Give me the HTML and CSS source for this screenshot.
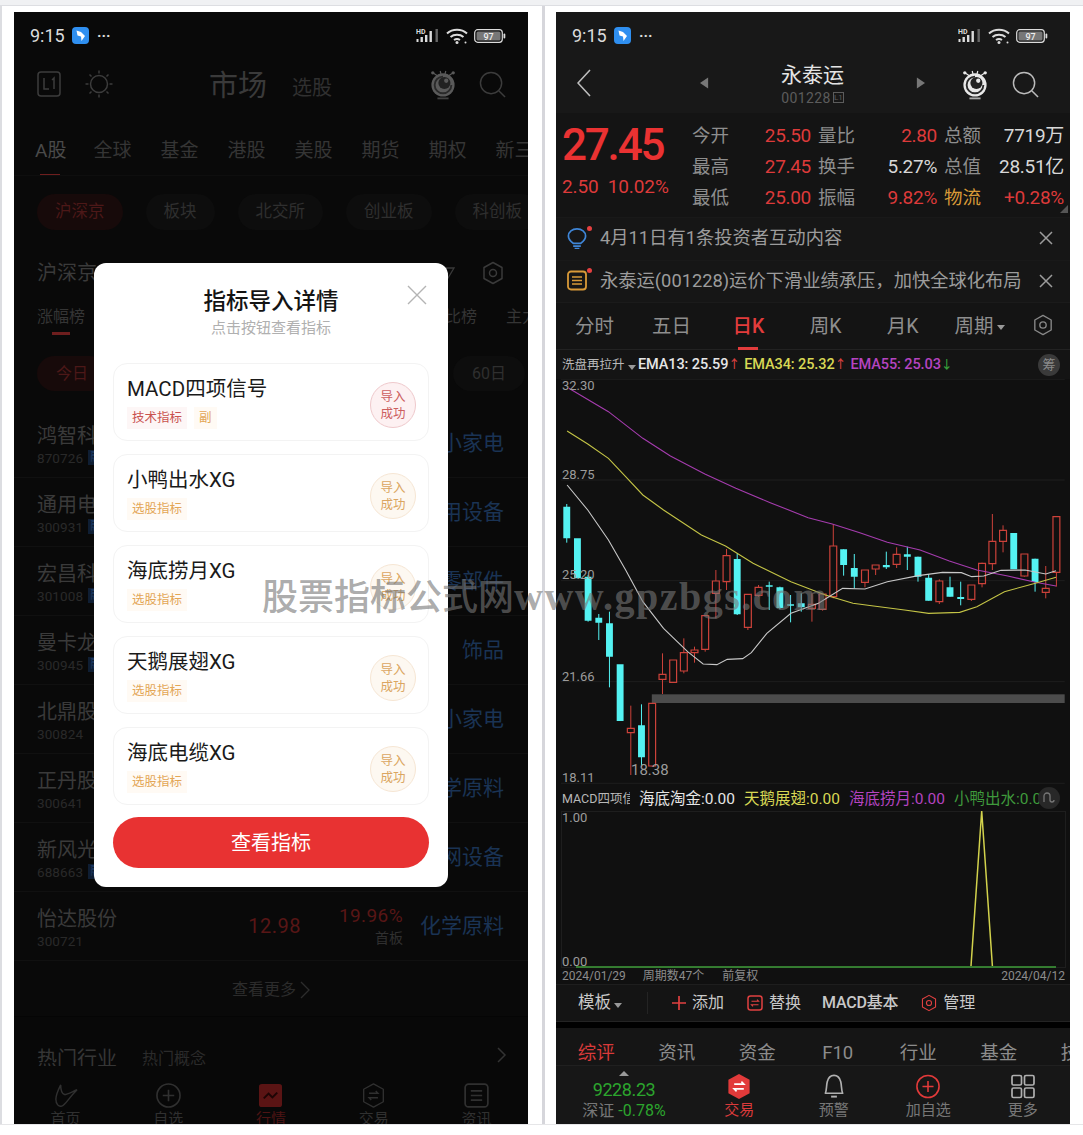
FILE: index.html
```html
<!DOCTYPE html>
<html lang="zh">
<head>
<meta charset="utf-8">
<title>指标导入详情</title>
<link rel="stylesheet" href="styles.css">
</head>
<body>
<svg class="defs" width="0" height="0" aria-hidden="true">
  <symbol id="i-app" viewBox="0 0 17 17"><rect width="17" height="17" rx="4" fill="#2f8ff0"/><path d="M4.500 3.500L9 5L13 9L9.500 14L9 9.500L5.500 8.500Z" fill="#fff"/></symbol>
  <symbol id="i-signal" viewBox="0 0 24 16"><text x="0" y="6" class="hd-text">HD</text><g fill="currentColor"><rect x="0.500" y="11" width="2" height="3"/><rect x="4.500" y="9" width="2.400" height="5"/><rect x="9" y="7" width="2.400" height="7"/><rect x="13.500" y="3" width="2.400" height="11"/></g><rect x="19.500" y="1" width="2.400" height="13" fill="#666"/></symbol>
  <symbol id="i-wifi" viewBox="0 0 22 16"><g fill="none" stroke="currentColor" stroke-width="2"><path d="M1 5.500C6.500 0.500 15.500 0.500 21 5.500"/><path d="M4.500 9C8 6 14 6 17.500 9"/><path d="M8 12C9.800 10.800 12.200 10.800 14 12"/></g><circle cx="11" cy="14.500" r="1.500" fill="currentColor"/><circle cx="19.500" cy="14.500" r="1" fill="currentColor"/></symbol>
  <symbol id="i-batt" viewBox="0 0 32 14"><rect x="0.700" y="0.700" width="27.600" height="12.600" rx="3" fill="none" stroke="currentColor" stroke-width="1.200"/><rect x="2.500" y="2.500" width="24" height="9" rx="1.500" fill="#777"/><rect x="29.500" y="4.500" width="1.800" height="5" rx="0.900" fill="currentColor"/><text x="14.500" y="10.500" class="batt-text">97</text></symbol>
  <symbol id="i-mascot" viewBox="0 0 28 34"><circle cx="3" cy="5" r="1.800" fill="currentColor"/><circle cx="25" cy="5" r="1.800" fill="currentColor"/><path d="M3 5L8 8M25 5L20 8M11 3L12 7M17 3L16 7" stroke="currentColor" stroke-width="1.300"/><circle cx="14" cy="18" r="12.500" fill="currentColor"/><path d="M14 9A9 9 0 1 0 23 18" fill="none" stroke="#2a2a2a" stroke-width="2"/><circle cx="15.500" cy="16" r="6.500" fill="#222"/><circle cx="17.500" cy="13.500" r="2.300" fill="currentColor"/><path d="M8 31.500H20V33.500H8Z" fill="currentColor" opacity="0.700"/></symbol>
  <symbol id="i-search" viewBox="0 0 28 28"><circle cx="12.500" cy="12.500" r="11" fill="none" stroke="currentColor" stroke-width="1.500"/><path d="M20.500 20.500L27 27" stroke="currentColor" stroke-width="1.500" fill="none"/></symbol>
  <symbol id="i-hex" viewBox="0 0 22 24"><path d="M11 1.500L20 6.500V17.500L11 22.500L2 17.500V6.500Z" fill="none" stroke="currentColor" stroke-width="1.500" stroke-linejoin="round"/><circle cx="11" cy="12" r="3.500" fill="none" stroke="currentColor" stroke-width="1.500"/></symbol>
  <symbol id="i-sx" viewBox="0 0 16 16"><path d="M2 2L14 14M14 2L2 14" stroke="currentColor" stroke-width="1.500" fill="none"/></symbol>
  <symbol id="i-trade" viewBox="0 0 24 28"><path d="M12 1L23 7V21L12 27L1 21V7Z" fill="currentColor"/><path d="M7 11.500H17L14.500 9M17 16.500H7L9.500 19" fill="none" stroke="#fff" stroke-width="1.700"/></symbol>
  <symbol id="i-trade-o" viewBox="0 0 24 28"><path d="M12 1L23 7V21L12 27L1 21V7Z" fill="none" stroke="currentColor" stroke-width="1.500" stroke-linejoin="round"/><path d="M7 11.500H17L14.500 9M17 16.500H7L9.500 19" fill="none" stroke="currentColor" stroke-width="1.500"/></symbol>
  <symbol id="i-plus-o" viewBox="0 0 26 26"><circle cx="13" cy="13" r="12" fill="none" stroke="currentColor" stroke-width="1.700"/><path d="M13 7V19M7 13H19" stroke="currentColor" stroke-width="1.700"/></symbol>
  <symbol id="i-doc" viewBox="0 0 22 22"><rect x="1" y="1" width="20" height="20" rx="3" fill="none" stroke="currentColor" stroke-width="1.500"/><path d="M6 7H16M6 11H16M6 15H16" stroke="currentColor" stroke-width="1.500"/></symbol>
</svg>

<div class="page">
  <div class="top-strip"></div>
  <div class="panels">
    <section class="panel panel-left">
      <div class="phone phone-dim">
        <div class="status">
          <span class="status-time">9:15</span>
          <svg class="ic-app"><use href="#i-app"/></svg>
          <span class="status-dots">···</span>
          <span class="status-right">
            <svg class="ic-signal"><use href="#i-signal"/></svg>
            <svg class="ic-wifi"><use href="#i-wifi"/></svg>
            <svg class="ic-batt"><use href="#i-batt"/></svg>
          </span>
        </div>
        <div class="m-nav">
          <svg class="ic-l1" viewBox="0 0 24 26"><rect x="1" y="1" width="22" height="24" rx="3" fill="none" stroke="currentColor" stroke-width="1.500"/><path d="M7 7V18H12M15 9L17 7V18" fill="none" stroke="currentColor" stroke-width="1.500"/></svg>
          <svg class="ic-sun" viewBox="0 0 28 28"><circle cx="14" cy="14" r="8.500" fill="none" stroke="currentColor" stroke-width="1.500"/><path d="M14 0.500V3.500M14 24.500V27.500M0.500 14H3.500M24.500 14H27.500M4.500 4.500L6.500 6.500M21.500 21.500L23.500 23.500M4.500 23.500L6.500 21.500M21.500 6.500L23.500 4.500" stroke="currentColor" stroke-width="1.500"/></svg>
          <span class="m-title">市场</span>
          <span class="m-sub">选股</span>
          <span class="m-nav-end">
            <svg class="ic-mascot ic-mascot-dim"><use href="#i-mascot"/></svg>
            <svg class="ic-search"><use href="#i-search"/></svg>
          </span>
        </div>
        <nav class="m-tabs">
          <span class="m-tab m-tab-on">A股</span><span class="m-tab">全球</span><span class="m-tab">基金</span><span class="m-tab">港股</span><span class="m-tab">美股</span><span class="m-tab">期货</span><span class="m-tab">期权</span><span class="m-tab">新三板</span>
        </nav>
        <div class="m-chips">
          <span class="chip chip-on">沪深京</span><span class="chip">板块</span><span class="chip">北交所</span><span class="chip">创业板</span><span class="chip">科创板</span>
        </div>
        <div class="m-head">
          <span class="m-head-title">沪深京A股</span>
          <span class="m-head-end">
            <svg class="ic-filter" viewBox="0 0 14 12"><path d="M1 1H13L7 11Z" fill="none" stroke="currentColor" stroke-width="1.300"/></svg>
            <svg class="ic-hex"><use href="#i-hex"/></svg>
          </span>
        </div>
        <div class="m-sub-tabs">
          <span class="m-sub-tab m-sub-tab-on">涨幅榜</span>
          <span class="m-sub-end"><span>量比榜</span><span>主力榜</span></span>
        </div>
        <div class="m-periods">
          <span class="period period-on">今日</span>
          <span class="period period-end">60日</span>
        </div>
        <div class="m-list">
          <div class="l-row"><div class="l-id"><div class="l-name">鸿智科技</div><div class="l-code">870726<span class="l-badge">融</span></div></div><div class="l-cat">小家电</div></div>
          <div class="l-row"><div class="l-id"><div class="l-name">通用电梯</div><div class="l-code">300931<span class="l-badge">融</span></div></div><div class="l-cat">专用设备</div></div>
          <div class="l-row"><div class="l-id"><div class="l-name">宏昌科技</div><div class="l-code">301008<span class="l-badge">融</span></div></div><div class="l-cat">汽车零部件</div></div>
          <div class="l-row"><div class="l-id"><div class="l-name">曼卡龙</div><div class="l-code">300945<span class="l-badge">融</span></div></div><div class="l-cat">饰品</div></div>
          <div class="l-row"><div class="l-id"><div class="l-name">北鼎股份</div><div class="l-code">300824</div></div><div class="l-cat">小家电</div></div>
          <div class="l-row"><div class="l-id"><div class="l-name">正丹股份</div><div class="l-code">300641</div></div><div class="l-cat">化学原料</div></div>
          <div class="l-row"><div class="l-id"><div class="l-name">新风光</div><div class="l-code">688663<span class="l-badge">融</span></div></div><div class="l-cat">电网设备</div></div>
          <div class="l-row"><div class="l-id"><div class="l-name">怡达股份</div><div class="l-code">300721</div></div><div class="l-price">12.98</div><div class="l-chg"><div class="l-pct">19.96%</div><div class="l-board">首板</div></div><div class="l-cat">化学原料</div></div>
        </div>
        <div class="m-more"><span>查看更多</span><svg class="ic-more" viewBox="0 0 10 18"><path d="M1 1L9 9L1 17" fill="none" stroke="currentColor" stroke-width="1.300"/></svg></div>
        <div class="m-hot">
          <span class="m-hot-a">热门行业</span><span class="m-hot-b">热门概念</span>
          <svg class="ic-hot" viewBox="0 0 10 16"><path d="M1 1L8 8L1 15" fill="none" stroke="currentColor" stroke-width="1.500"/></svg>
        </div>
        <div class="m-bottom">
          <div class="m-bi"><svg class="ic-m" viewBox="0 0 26 26"><path d="M8 2C5 8 3 13 3 17C3 22 6 25 9 24C13 23 15 17 25 7C20 9 15 12 12 12C9 11 8 7 8 2Z" fill="none" stroke="currentColor" stroke-width="1.500"/></svg><span>首页</span></div>
          <div class="m-bi"><svg class="ic-m"><use href="#i-plus-o"/></svg><span>自选</span></div>
          <div class="m-bi m-bi-on"><svg class="ic-m" viewBox="0 0 26 26"><rect x="1" y="1" width="24" height="24" rx="3" fill="#5a1414"/><path d="M6 16L11 11L15 15L20 10" fill="none" stroke="#1d0505" stroke-width="2"/></svg><span>行情</span></div>
          <div class="m-bi"><svg class="ic-m"><use href="#i-trade-o"/></svg><span>交易</span></div>
          <div class="m-bi"><svg class="ic-m"><use href="#i-doc"/></svg><span>资讯</span></div>
        </div>

        <div class="modal">
          <svg class="modal-close" viewBox="0 0 20 20"><path d="M1 1L19 19M19 1L1 19" stroke="currentColor" stroke-width="1.400" fill="none"/></svg>
          <h2 class="modal-title">指标导入详情</h2>
          <p class="modal-sub">点击按钮查看指标</p>
          <div class="cards">
            <div class="card"><div><div class="card-name">MACD四项信号</div><div class="card-tags"><span class="tag tag-red">技术指标</span><span class="tag tag-orange">副</span></div></div><div class="stamp stamp-red">导入<br>成功</div></div>
            <div class="card"><div><div class="card-name">小鸭出水XG</div><div class="card-tags"><span class="tag tag-orange">选股指标</span></div></div><div class="stamp">导入<br>成功</div></div>
            <div class="card"><div><div class="card-name">海底捞月XG</div><div class="card-tags"><span class="tag tag-orange">选股指标</span></div></div><div class="stamp">导入<br>成功</div></div>
            <div class="card"><div><div class="card-name">天鹅展翅XG</div><div class="card-tags"><span class="tag tag-orange">选股指标</span></div></div><div class="stamp">导入<br>成功</div></div>
            <div class="card"><div><div class="card-name">海底电缆XG</div><div class="card-tags"><span class="tag tag-orange">选股指标</span></div></div><div class="stamp">导入<br>成功</div></div>
          </div>
          <button class="modal-btn">查看指标</button>
        </div>
      </div>
    </section>

    <section class="panel panel-right">
      <div class="phone phone-live">
        <div class="status">
          <span class="status-time">9:15</span>
          <svg class="ic-app"><use href="#i-app"/></svg>
          <span class="status-dots">···</span>
          <span class="status-right">
            <svg class="ic-signal"><use href="#i-signal"/></svg>
            <svg class="ic-wifi"><use href="#i-wifi"/></svg>
            <svg class="ic-batt"><use href="#i-batt"/></svg>
          </span>
        </div>
        <div class="s-nav">
          <svg class="ic-back" viewBox="0 0 14 28"><path d="M13 1L1 14L13 27" fill="none" stroke="currentColor" stroke-width="1.600"/></svg>
          <svg class="ic-tri ic-tri-l" viewBox="0 0 10 12"><path d="M9 0V12L0 6Z" fill="currentColor"/></svg>
          <div class="s-title-box">
            <div class="s-title">永泰运</div>
            <div class="s-code">001228<span class="s-l1">L1</span></div>
          </div>
          <svg class="ic-tri ic-tri-r" viewBox="0 0 10 12"><path d="M1 0V12L10 6Z" fill="currentColor"/></svg>
          <svg class="ic-mascot"><use href="#i-mascot"/></svg>
          <svg class="ic-search ic-search-live"><use href="#i-search"/></svg>
        </div>
        <div class="quote">
          <div class="q-price">
            <div class="q-last">27.45</div>
            <div class="q-chg"><span>2.50</span><span>10.02%</span></div>
          </div>
          <div class="q-grid">
            <span class="q-l">今开</span><span class="q-v q-red">25.50</span><span class="q-l">量比</span><span class="q-v q-red">2.80</span><span class="q-l">总额</span><span class="q-v">7719万</span>
            <span class="q-l">最高</span><span class="q-v q-red">27.45</span><span class="q-l">换手</span><span class="q-v">5.27%</span><span class="q-l">总值</span><span class="q-v">28.51亿</span>
            <span class="q-l">最低</span><span class="q-v q-red">25.00</span><span class="q-l">振幅</span><span class="q-v q-red">9.82%</span><span class="q-l q-gold">物流</span><span class="q-v q-red">+0.28%</span>
          </div>
          <span class="q-corner"></span>
        </div>
        <div class="notice">
          <span class="n-icon"><svg class="ic-n" viewBox="0 0 20 22"><path d="M6 16C3 14 1 12 1 8.500C1 4 5 1 10 1C15 1 19 4 19 8.500C19 12 17 14 14 16Z" fill="none" stroke="#3f86d8" stroke-width="1.800"/><path d="M6 19H14M7.500 21.500H12.500" stroke="#3f86d8" stroke-width="1.600"/></svg><i class="n-dot"></i></span>
          <span class="n-text">4月11日有1条投资者互动内容</span>
          <svg class="ic-x"><use href="#i-sx"/></svg>
        </div>
        <div class="notice notice-b">
          <span class="n-icon"><svg class="ic-n" viewBox="0 0 20 20"><rect x="1" y="1" width="18" height="18" rx="3" fill="none" stroke="#d99a38" stroke-width="1.800"/><path d="M5 6.500H15M5 10H15M5 13.500H15" stroke="#d99a38" stroke-width="1.500"/></svg><i class="n-dot"></i></span>
          <span class="n-text">永泰运(001228)运价下滑业绩承压，加快全球化布局</span>
          <svg class="ic-x"><use href="#i-sx"/></svg>
        </div>
        <nav class="k-tabs">
          <span class="k-tab">分时</span><span class="k-tab">五日</span><span class="k-tab k-tab-on">日K</span><span class="k-tab">周K</span><span class="k-tab">月K</span><span class="k-tab">周期<i class="caret"></i></span>
          <svg class="ic-hex ic-hex-k"><use href="#i-hex"/></svg>
        </nav>
        <div class="legend">
          <span class="lg-name">洗盘再拉升<i class="caret caret-sm"></i></span>
          <span class="lg lg-w">EMA13: 25.59<i class="arrow-up">↑</i></span>
          <span class="lg lg-y">EMA34: 25.32<i class="arrow-up">↑</i></span>
          <span class="lg lg-p">EMA55: 25.03<i class="arrow-dn">↓</i></span>
          <span class="badge-round">筹</span>
        </div>
        <div class="chart">
          <svg class="chart-svg" viewBox="37.75 27 1492.7 1221" preserveAspectRatio="none">
            <g class="grid"><path d="M52 28H1515M52 330H1515M52 632H1515M52 935H1515M52 1240H1515"/></g>
            <rect class="chart-band" x="316" y="973" width="1199" height="26"/>
            <path class="wick-red" d="M255 1007V1075M255 1088V1215M317 1188V1190M347 850V913M347 928V972M409 805V848M409 903V910M440 830V840M440 848V878M471 838V845M502 600V633M502 670V745M533 537V557M533 635V660M595 772V780M626 645V652M626 676V680M781 670V703M781 715V755M812 718V722M843 462V528M843 680V685M935 637V652M966 597V615M1027 532V553M1027 583V594M1151 628V633M1151 695V702M1244 688V693M1275 578V580M1275 641V652M1305 432V514M1305 581V600M1336 466V481M1336 514V547M1398 618V620M1460 588V655M1460 667V685M1491 607V650"/>
            <path class="body-red" d="M245 1075h20v13h-20zM307 1000h20v188h-20zM337 913h20v15h-20zM368 870h20v67h-20zM399 848h20v55h-20zM430 840h20v8h-20zM461 737h20v101h-20zM492 633h20v37h-20zM523 557h20v78h-20zM585 673h20v99h-20zM616 652h20v24h-20zM771 703h20v12h-20zM802 672h20v46h-20zM833 528h20v152h-20zM925 600h20v37h-20zM956 585h20v12h-20zM1017 553h20v30h-20zM1141 633h20v62h-20zM1234 645h20v43h-20zM1265 580h20v61h-20zM1295 514h20v67h-20zM1326 481h20v33h-20zM1388 552h20v66h-20zM1450 655h20v12h-20zM1481 440h20v167h-20z"/>
            <path class="wick-cyan" d="M69 402V518M131 615V755M162 732V810M193 725V952M286 1003V1190M564 550V735M657 635V720M688 650V718M719 675V757M750 670V725M873 538V617M904 552V655M997 545V597M1058 530V600M1089 560V635M1120 612V692M1182 620V680M1213 635V706M1429 566V665"/>
            <path class="body-cyan" d="M59 410h20v95h-20zM90 505h20v120h-20zM121 620h20v132h-20zM152 743h20v15h-20zM183 760h20v100h-20zM214 883h20v170h-20zM276 1066h20v96h-20zM554 567h20v166h-20zM647 646h20v4h-20zM678 652h20v62h-20zM709 703h20v4h-20zM740 700h20v12h-20zM863 538h20v47h-20zM894 594h20v26h-20zM987 585h20v7h-20zM1048 553h20v7h-20zM1079 560h20v60h-20zM1110 623h20v69h-20zM1172 652h20v28h-20zM1203 681h20v6h-20zM1357 489h20v109h-20zM1419 566h20v70h-20z"/>
            <polyline class="ln-purple" points="75,55 190,125 290,205 370,258 470,312 560,355 660,398 770,443 840,462 920,488 1000,517 1095,540 1180,573 1260,600 1350,618 1430,637 1490,648"/>
            <polyline class="ln-yellow" points="70,183 130,222 190,265 240,320 290,375 350,420 460,495 530,528 610,580 720,635 820,675 900,700 960,708 1050,720 1120,730 1210,727 1260,710 1340,665 1430,640 1490,622"/>
            <polyline class="ln-white" points="70,345 130,420 190,510 240,600 290,695 350,775 420,845 465,882 505,884 535,868 580,866 605,848 650,790 720,730 800,700 870,655 935,657 1000,635 1090,617 1160,607 1215,608 1245,620 1280,618 1330,601 1400,600 1460,612 1490,602"/>
          </svg>
          <span class="ax ax-1">32.30</span><span class="ax ax-2">28.75</span><span class="ax ax-3">25.20</span><span class="ax ax-4">21.66</span><span class="ax ax-5">18.11</span><span class="ax ax-low">18.38</span>
        </div>
        <div class="legend legend-macd">
          <span class="lg-name lg-name-clip">MACD四项信号</span>
          <span class="lg2 lg-w">海底淘金:0.00</span>
          <span class="lg2 lg-y">天鹅展翅:0.00</span>
          <span class="lg2 lg-p">海底捞月:0.00</span>
          <span class="lg2 lg-g">小鸭出水:0.00</span>
          <span class="badge-round badge-dark"><svg class="ic-refresh" viewBox="0 0 14 14"><path d="M2 11V5A3 3 0 0 1 8 5V9A2 2 0 0 0 12 9" fill="none" stroke="currentColor" stroke-width="1.300"/></svg></span>
        </div>
        <div class="macd">
          <svg class="macd-svg" viewBox="0 0 514 157">
            <rect class="macd-frame" x="5.500" y="0.500" width="504" height="156"/>
            <polyline class="ln-yellow-m" points="415,155 425.700,0 436.400,155"/>
            <path class="ln-green" d="M20 156H500"/>
          </svg>
          <span class="ax ax-m1">1.00</span><span class="ax ax-m0">0.00</span>
        </div>
        <div class="dates"><span>2024/01/29</span><span class="d-mid">周期数47个</span><span>前复权</span><span class="d-end">2024/04/12</span></div>
        <div class="toolbar">
          <span class="tb-mode">模板<i class="caret caret-sm"></i></span>
          <i class="tb-div"></i>
          <span class="tb-item tb-add"><svg class="ic-tb-plus" viewBox="0 0 14 14"><path d="M7 0V14M0 7H14" stroke="currentColor" stroke-width="1.700"/></svg>添加</span>
          <span class="tb-item"><svg class="ic-tb" viewBox="0 0 16 16"><rect x="1" y="1" width="14" height="14" rx="2.500" fill="none" stroke="#e04040" stroke-width="1.500"/><path d="M4.500 6.200H11.500L10 4.700M11.500 9.800H4.500L6 11.300" fill="none" stroke="#e04040" stroke-width="1.100"/></svg>替换</span>
          <span class="tb-item tb-macd">MACD基本</span>
          <span class="tb-item"><svg class="ic-tb ic-tb-red"><use href="#i-hex"/></svg>管理</span>
        </div>
        <div class="gap-bar"></div>
        <nav class="d-tabs">
          <span class="d-tab d-tab-on">综评</span><span class="d-tab">资讯</span><span class="d-tab">资金</span><span class="d-tab">F10</span><span class="d-tab">行业</span><span class="d-tab">基金</span><span class="d-tab">技术</span>
        </nav>
        <div class="s-bottom">
          <div class="s-index"><i class="idx-up"></i><div class="idx-val">9228.23</div><div class="idx-sub">深证 <b>-0.78%</b></div></div>
          <div class="s-bi s-bi-red"><svg class="ic-s"><use href="#i-trade"/></svg><span>交易</span></div>
          <div class="s-bi"><svg class="ic-s" viewBox="0 0 24 28"><path d="M3 21C4.500 18 4 13 5 9C6 5 9 2.500 12 2.500C15 2.500 18 5 19 9C20 13 19.500 18 21 21Z" fill="none" stroke="currentColor" stroke-width="1.700" stroke-linejoin="round"/><path d="M9 24.500H15" stroke="currentColor" stroke-width="2"/></svg><span>预警</span></div>
          <div class="s-bi s-bi-plus"><svg class="ic-s ic-s-red"><use href="#i-plus-o"/></svg><span>加自选</span></div>
          <div class="s-bi"><svg class="ic-s" viewBox="0 0 24 24"><g fill="none" stroke="currentColor" stroke-width="1.700"><rect x="1" y="1" width="9.500" height="9.500" rx="1.500"/><rect x="13.500" y="1" width="9.500" height="9.500" rx="1.500"/><rect x="1" y="13.500" width="9.500" height="9.500" rx="1.500"/><rect x="13.500" y="13.500" width="9.500" height="9.500" rx="1.500"/></g></svg><span>更多</span></div>
        </div>
      </div>
    </section>
  </div>
  <div class="watermark"><span>股票指标公式网</span><span class="wm-latin">www.gpzbgs.com</span></div>
</div>
</body>
</html>
```
FILE: styles.css
```css
* { box-sizing: border-box; }
html, body { margin: 0; padding: 0; background: #fff; }
body { font-family: Roboto, "Noto Sans CJK SC", sans-serif; }
i { font-style: normal; }
svg { display: block; flex: none; }
.defs { position: absolute; }

.page { position: relative; width: 1083px; height: 1135px; overflow: hidden; background: #fff; }
.top-strip { height: 6px; background: #f0f1f3; border-bottom: 1px solid #dddee2; }
.panels { display: flex; height: 1119px; border-bottom: 1px solid #e6e6e8; }
.panel { padding-top: 6px; }
.panel-left { width: 545px; padding-left: 12px; border-left: 2px solid #dcdde1; border-right: 3px solid #d6d6db; }
.panel-right { flex: 1; padding-left: 11px; }

.phone { position: relative; width: 514px; height: 1112px; overflow: hidden; display: flex; flex-direction: column; }
.phone-dim { background: #090909; }
.phone-live { background: #131313; }

/* status bar */
.status { display: flex; align-items: center; height: 43px; padding: 4px 22px 0 16px; flex: none; color: #dcdcdc; }
.phone-live .status, .s-nav { background: #181818; }
.status-time { font-size: 18px; font-weight: 400; line-height: 20px; width: 42px; }
.ic-app { width: 17px; height: 17px; }
.status-dots { margin-left: 8px; font-size: 15px; font-weight: 700; line-height: 12px; }
.status-right { margin-left: auto; display: flex; align-items: center; gap: 6px; }
.ic-signal { width: 24px; height: 16px; }
.ic-wifi { width: 22px; height: 16px; }
.ic-batt { width: 32px; height: 14px; }
.hd-text { font: 700 7px Roboto, sans-serif; fill: currentColor; }
.batt-text { font: 500 9px Roboto, sans-serif; fill: #eee; text-anchor: middle; }

/* left: market */
.m-nav { display: flex; align-items: center; height: 67px; padding: 0 22px 9px 23px; flex: none; color: #3c3c3c; }
.ic-l1 { width: 24px; height: 26px; }
.ic-sun { width: 28px; height: 28px; margin-left: 24px; }
.m-title { margin-left: 96px; margin-top: 4px; font-size: 29px; line-height: 36px; color: #3a3a3a; }
.m-sub { margin-left: 25px; margin-top: 8px; font-size: 20px; line-height: 28px; color: #303030; }
.m-nav-end { margin-left: auto; display: flex; align-items: center; gap: 23px; }
.ic-mascot { width: 26px; height: 32px; color: #e8e8e8; }
.ic-mascot-dim { color: #5a5a5a; }
.ic-search { width: 27px; height: 27px; color: #3c3c3c; }
.ic-search-live { color: #bbb; }

.m-tabs { display: flex; gap: 29px; height: 54px; padding: 17px 0 0 21px; flex: none; overflow: hidden; border-bottom: 1px solid #0e0e0e; }
.m-tab { position: relative; flex: none; font-size: 19px; line-height: 24px; color: #353535; }
.m-tab-on { color: #4a4a4a; margin-right: -2px; }
.m-tab-on::after { content: ""; position: absolute; left: 5px; top: 35px; width: 20px; height: 3px; background: #6e1e1e; }
.m-chips { display: flex; gap: 23px; height: 54px; padding: 18px 0 0 23px; flex: none; overflow: hidden; }
.chip { flex: none; height: 36px; padding: 0 18px; border-radius: 18px; background: #0d0d0d; color: #2f2f2f; font-size: 16.500px; line-height: 36px; }
.chip-on { background: #170a0a; color: #4c1818; }
.m-head { display: flex; align-items: center; height: 36px; padding: 0 24px 0 23px; margin-top: 25px; flex: none; color: #3a3a3a; }
.m-head-title { font-size: 20px; line-height: 28px; color: #3a3a3a; }
.m-head-end { margin-left: auto; display: flex; align-items: center; gap: 27px; }
.ic-filter { width: 14px; height: 12px; }
.ic-hex { width: 22px; height: 24px; }
.m-sub-tabs { position: relative; display: flex; height: 44px; padding: 15px 0 0 23px; flex: none; font-size: 16px; line-height: 22px; color: #353535; overflow: hidden; }
.m-sub-tab-on::after { content: ""; position: absolute; left: 38px; top: 41px; width: 18px; height: 3px; background: #6e1e1e; }
.m-sub-end { margin-left: auto; margin-right: -26px; display: flex; gap: 29px; }
.m-periods { display: flex; height: 74px; padding: 21px 3px 0 23px; flex: none; }
.period { height: 35px; padding: 0 19px; border-radius: 18px; background: #0d0d0d; color: #2f2f2f; font-size: 16px; line-height: 35px; }
.period-on { background: #170a0a; color: #4c1818; }
.period-end { margin-left: auto; }
.m-list { flex: none; }
.l-row { display: flex; align-items: center; height: 69px; padding: 0 24px 0 23px; border-bottom: 1px solid #101010; overflow: hidden; }
.l-id { flex: 1; min-width: 0; padding-top: 1px; }
.l-name { font-size: 20px; line-height: 28px; color: #3a3a3a; }
.l-code { display: flex; align-items: center; gap: 5px; font-size: 13.500px; line-height: 16px; letter-spacing: 0.100px; color: #292929; }
.l-badge { padding: 0 2px; font-size: 12px; line-height: 15px; background: #0f1e33; color: #1e3c66; }
.l-price { font-size: 20px; line-height: 26px; color: #581616; letter-spacing: 0.500px; }
.l-chg { width: 102px; text-align: right; }
.l-pct { font-size: 19px; line-height: 24px; color: #581616; letter-spacing: 0.400px; }
.l-board { font-size: 14px; line-height: 20px; color: #303030; }
.l-cat { width: 101px; text-align: right; white-space: nowrap; direction: rtl; font-size: 21px; line-height: 28px; color: #1a3354; }
.m-more { display: flex; align-items: center; justify-content: center; gap: 4px; height: 56px; padding-top: 3px; flex: none; font-size: 16px; line-height: 22px; color: #2c2c2c; border-bottom: 1px solid #050505; }
.ic-more { width: 10px; height: 18px; }
.m-hot { display: flex; align-items: center; height: 49px; padding: 19px 21px 0 23px; flex: none; overflow: hidden; background: #080808; }
.m-hot-a { font-size: 20px; line-height: 28px; color: #363636; margin-top: 16px; }
.m-hot-b { margin-left: 25px; font-size: 16px; line-height: 24px; color: #2b2b2b; margin-top: 16px; }
.ic-hot { margin-left: auto; margin-top: 8px; width: 10px; height: 16px; color: #333; }
.m-bottom { display: flex; height: 58px; flex: none; background: #080808; overflow: hidden; color: #2e2e2e; }
.m-bi { flex: 1; display: flex; flex-direction: column; align-items: center; padding-top: 17px; font-size: 15px; line-height: 22px; color: #303030; }
.m-bi-on { color: #4e1414; }
.ic-m { width: 25px; height: 25px; }

/* modal */
.modal { position: absolute; left: 80px; top: 251px; width: 354px; height: 624px; padding: 23px 19px 0; background: #fff; border-radius: 12px; }
.modal-close { position: absolute; right: 21px; top: 22px; width: 20px; height: 20px; color: #b4b4b4; }
.modal-title { margin: 0; font-size: 22.500px; font-weight: 500; line-height: 30px; text-align: center; color: #141414; }
.modal-sub { margin: 2px 0 0; font-size: 15px; line-height: 20px; text-align: center; color: #b0b0b0; }
.cards { display: flex; flex-direction: column; gap: 13px; margin-top: 25px; }
.card { display: flex; align-items: center; justify-content: space-between; height: 78px; padding: 0 12px 0 13px; border: 1px solid #f3f3f3; border-radius: 14px; background: #fff; }
.card-name { font-size: 20.500px; line-height: 26px; color: #1a1a1a; }
.card-tags { display: flex; gap: 7px; margin-top: 5px; }
.tag { padding: 0 5px; font-size: 12.500px; line-height: 22px; }
.tag-red { background: #fdf6f6; color: #c9524f; }
.tag-orange { background: #fffaf4; color: #e3a656; }
.stamp { width: 46px; height: 46px; margin-top: 6px; border-radius: 50%; border: 1px solid #f6e6d4; background: #fdf8f1; color: #dba661; font-size: 12.500px; line-height: 17px; text-align: center; padding-top: 5px; }
.stamp-red { border-color: #efc9cc; background: #fdf1f2; color: #cc5f5f; }
.modal-btn { display: block; width: 100%; height: 51px; margin-top: 12px; border: 0; border-radius: 26px; background: #e83232; color: #fff; font: 400 20px/51px Roboto, "Noto Sans CJK SC", sans-serif; text-align: center; }

/* right: stock */
.s-nav { position: relative; display: flex; align-items: center; height: 58px; padding: 0 31px 0 21px; flex: none; color: #bdbdbd; }
.ic-back { width: 14px; height: 28px; margin-bottom: 3px; }
.ic-tri { width: 9px; height: 12px; color: #777; margin-bottom: 2px; }
.ic-tri-l { margin-left: 109px; }
.s-title-box { width: 208px; text-align: center; margin-bottom: 1px; }
.s-title { font-size: 21px; line-height: 28px; color: #e4e4e4; }
.s-code { display: flex; align-items: center; justify-content: center; gap: 2px; font-size: 14px; line-height: 18px; letter-spacing: 0.400px; color: #5c5c5c; }
.s-l1 { width: 11px; height: 11px; border: 1px solid #5c5c5c; font-size: 8px; line-height: 9px; letter-spacing: 0; text-align: center; }
.ic-tri-r { margin-right: 37px; }
.s-nav .ic-search { margin-left: 24px; }
.quote { position: relative; display: flex; height: 104px; padding: 7px 0 0 6px; flex: none; background: #141414; }
.q-price { width: 130px; color: #e53535; }
.q-last { font-size: 44px; font-weight: 500; line-height: 50px; letter-spacing: -2.200px; color: #ea3232; }
.q-chg { display: flex; gap: 9px; margin-top: 5px; font-size: 19px; line-height: 24px; letter-spacing: -0.100px; color: #dd3a3a; }
.q-grid { display: grid; grid-template-columns: 37px 82px 44px 82px 44px 83px; grid-auto-rows: 31px; align-items: center; }
.q-l { justify-self: end; font-size: 18.500px; line-height: 24px; color: #8e8e8e; white-space: nowrap; }
.q-v { justify-self: end; font-size: 19px; font-weight: 400; line-height: 24px; color: #d8d8d8; white-space: nowrap; letter-spacing: -0.300px; }
.q-red { color: #dd3a3a; }
.q-gold { color: #d99a38; }
.q-corner { position: absolute; right: 2px; bottom: 4px; width: 0; height: 0; border-left: 8px solid transparent; border-bottom: 8px solid #555; }
.notice { display: flex; align-items: center; height: 43px; padding: 0 16px 2px 11px; flex: none; border-top: 1px solid #191919; background: #161616; }
.notice-b { height: 42px; }
.n-icon { position: relative; width: 33px; flex: none; }
.ic-n { width: 20px; height: 21px; }
.n-dot { position: absolute; left: 20px; top: -2px; width: 5px; height: 5px; border-radius: 50%; background: #e54040; }
.n-text { flex: 1; font-size: 18.300px; line-height: 26px; color: #9c9c9c; white-space: nowrap; }
.ic-x { width: 16px; height: 16px; color: #9c9c9c; }
.k-tabs { position: relative; display: flex; align-items: center; height: 48px; padding-bottom: 3px; flex: none; border-top: 1px solid #1b1b1b; border-bottom: 1px solid #222; background: #141414; }
.k-tab { position: relative; width: 77px; height: 100%; display: flex; align-items: center; justify-content: center; font-size: 19.500px; color: #8e8e8e; }
.k-tab-on { color: #e23c3c; font-weight: 500; }
.k-tab-on::after { content: ""; position: absolute; left: 28px; bottom: -4px; width: 20px; height: 3px; background: #e23c3c; }
.caret { display: inline-block; margin-left: 3px; width: 0; height: 0; margin-top: 5px; border-left: 4.500px solid transparent; border-right: 4.500px solid transparent; border-top: 5px solid #999; }
.caret-sm { margin-left: 3px; }
.ic-hex-k { margin-left: 15px; color: #888; width: 20px; height: 22px; }
.legend { position: relative; display: flex; align-items: center; gap: 8px; height: 29px; padding: 0 0 0 6px; flex: none; overflow: hidden; background: #141414; }
.lg-name { display: inline-flex; align-items: center; width: 68px; flex: none; font-size: 12.500px; line-height: 16px; color: #b8b8b8; white-space: nowrap; }
.lg-name-clip { overflow: hidden; }
.lg { flex: none; font-size: 14.500px; font-weight: 500; line-height: 18px; white-space: nowrap; margin-right: -4px; letter-spacing: -0.100px; }
.lg-y { color: #d8d854; }
.lg-p { color: #b544c0; }
.lg-g { color: #3f9a3c; }
.lg-w { color: #e6e6e6; font-weight: 500; }
.arrow-up { color: #d84040; font-size: 12px; }
.arrow-dn { color: #37a03a; font-size: 12px; }
.badge-round { position: absolute; right: 10px; top: 4px; width: 22px; height: 22px; border-radius: 50%; background: #3a3a3a; color: #8a8a8a; font-size: 13px; line-height: 22px; text-align: center; }
.chart { position: relative; height: 407px; flex: none; background: #101010; }
.chart-svg { width: 514px; height: 407px; }
.grid { fill: none; stroke: #1e1e1e; stroke-width: 1px; }
.grid path, .wick-red, .body-red, .wick-cyan, .body-cyan, .ln-purple, .ln-yellow, .ln-white { vector-effect: non-scaling-stroke; }
.chart-band { fill: #4c4c4c; }
.wick-red { fill: none; stroke: #cc423a; stroke-width: 1px; }
.body-red { fill: none; stroke: #cc423a; stroke-width: 1.200px; }
.wick-cyan { fill: none; stroke: #54f2f2; stroke-width: 1px; }
.body-cyan { fill: #54f2f2; }
.ln-purple { fill: none; stroke: #a53cae; stroke-width: 1.100px; }
.ln-yellow { fill: none; stroke: #c4c446; stroke-width: 1.100px; }
.ln-white { fill: none; stroke: #c8c8c8; stroke-width: 1.100px; }
.ax { position: absolute; left: 6px; font-size: 13px; line-height: 14px; color: #9c9c9c; }
.ax-1 { top: 0; }
.ax-2 { top: 89px; }
.ax-3 { top: 189px; }
.ax-4 { top: 291px; }
.ax-5 { top: 392px; }
.ax-low { left: 75px; top: 384px; font-size: 15px; }
.legend-macd { height: 25px; gap: 9px; background: #101010; }
.lg2 { flex: none; font-size: 15.500px; line-height: 20px; white-space: nowrap; }
.lg2.lg-w { font-weight: 400; }
.badge-dark { top: 1px; background: #282828; color: #777; padding: 4px; }
.ic-refresh { width: 14px; height: 14px; }
.macd { position: relative; height: 157px; flex: none; background: #101010; }
.macd-svg { width: 514px; height: 157px; }
.macd-frame { fill: none; stroke: #1e1e1e; }
.ln-yellow-m { fill: none; stroke: #d2d24c; stroke-width: 1.500px; }
.ln-green { fill: none; stroke: #3f9e3a; stroke-width: 1.500px; }
.ax-m1 { top: 0; }
.ax-m0 { top: 144px; }
.dates { display: flex; align-items: center; height: 16px; padding: 0 5px 0 6px; flex: none; font-size: 12px; line-height: 16px; color: #8c8c8c; background: #101010; }
.d-mid { margin-left: 17px; margin-right: 18px; }
.d-end { margin-left: auto; }
.toolbar { display: flex; align-items: center; height: 38px; padding-left: 22px; flex: none; border-top: 1px solid #1e1e1e; border-bottom: 1px solid #232323; background: #141414; color: #c8c8c8; font-size: 16px; line-height: 22px; }
.tb-mode { display: inline-flex; align-items: center; width: 47px; font-size: 16.500px; white-space: nowrap; }
.tb-div { width: 1px; height: 22px; margin-left: 22px; background: #242424; }
.tb-item { display: inline-flex; align-items: center; white-space: nowrap; gap: 6px; }
.tb-add { margin-left: 24px; }
.ic-tb-plus { width: 14px; height: 14px; color: #e04040; }
.ic-tb { width: 16px; height: 16px; }
.ic-tb-red { color: #e04040; height: 18px; }
.tb-item + .tb-item { margin-left: 23px; }
.tb-macd { font-weight: 500; margin-left: 21px !important; letter-spacing: -0.200px; }
.gap-bar { height: 6px; flex: none; background: #000; }
.d-tabs { display: flex; align-items: center; height: 38px; padding-top: 12px; flex: none; overflow: hidden; border-bottom: 1px solid #202020; background: #151515; }
.d-tab { flex: none; width: 80.500px; text-align: center; font-size: 18.500px; line-height: 24px; color: #8c8c8c; }
.d-tab-on { color: #d93a3a; }
.s-bottom { display: flex; height: 58px; flex: none; background: #171717; }
.s-index { position: relative; width: 136px; padding-top: 13px; text-align: center; }
.idx-up { position: absolute; left: 63px; top: 5px; width: 0; height: 0; border-left: 5px solid transparent; border-right: 5px solid transparent; border-bottom: 5px solid #999; }
.idx-val { font-size: 18px; line-height: 22px; letter-spacing: -0.400px; color: #2ca52e; }
.idx-sub { font-size: 16px; line-height: 20px; white-space: nowrap; color: #777; }
.idx-sub b { font-weight: 400; color: #2ca52e; }
.s-bi { width: 94.500px; display: flex; flex-direction: column; align-items: center; padding-top: 7px; font-size: 15px; line-height: 20px; color: #777; }
.s-bi-red { color: #d93a3a; }
.ic-s { width: 24px; height: 27px; color: #b0b0b0; }
.s-bi-red .ic-s { color: #e23a3a; }
.ic-s-red { color: #e23a3a; }

.watermark { position: absolute; left: 262px; top: 575px; display: flex; align-items: baseline; font-family: "Liberation Serif", "Noto Sans CJK SC", serif; font-size: 36px; line-height: 44px; font-weight: 500; color: rgba(118, 118, 118, 0.62); white-space: nowrap; pointer-events: none; }
.wm-latin { font-size: 40px; letter-spacing: 1.500px; font-weight: 700; }
```
